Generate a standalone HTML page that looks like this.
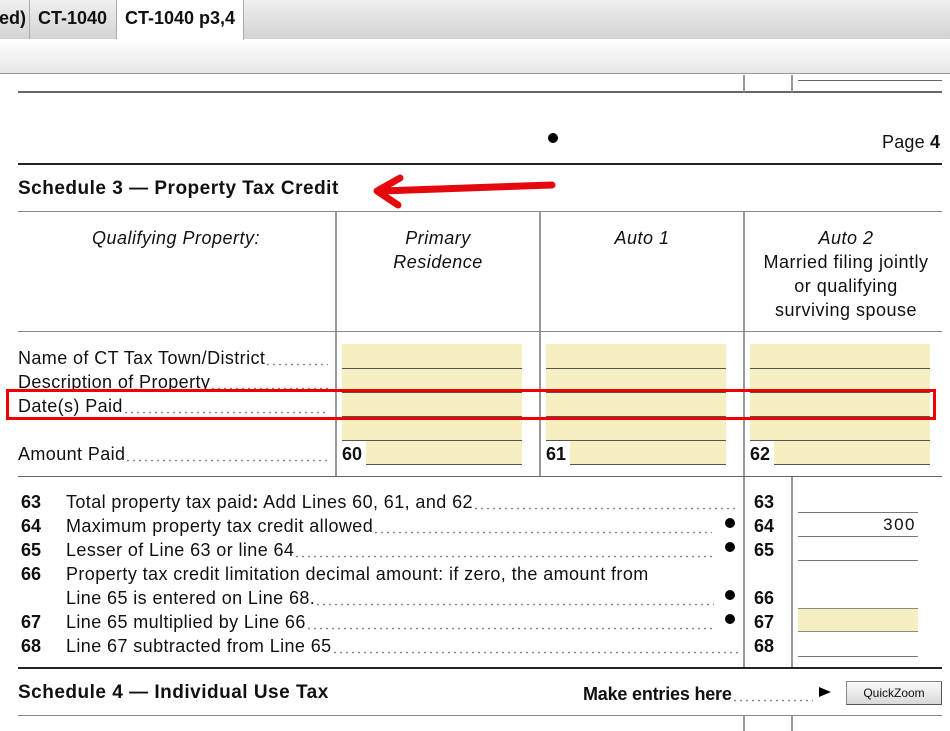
<!DOCTYPE html>
<html><head><meta charset="utf-8"><style>
*{margin:0;padding:0;box-sizing:border-box}
body{width:950px;height:731px;overflow:hidden;background:#fff;font-family:"Liberation Sans",Arial,sans-serif;color:#111;position:relative}
.a{position:absolute}
.h{position:absolute;height:1px;background:#555}
.v{position:absolute;width:2px;background:#999}
.t{position:absolute;font-size:18px;letter-spacing:0.4px;white-space:nowrap;line-height:20px}
.b{font-weight:bold;letter-spacing:0}
.y{position:absolute;background:#f5efc2}
.row{position:absolute;display:flex;font-size:18px;letter-spacing:0.4px;white-space:nowrap;line-height:20px}
.row .d{flex:1;background-image:radial-gradient(circle,#777 0.7px,transparent 1.1px);background-size:6px 3px;background-repeat:repeat-x;background-position:0 15px}
.bul{position:absolute;width:10px;height:10px;border-radius:50%;background:#000}
.hd{position:absolute;font-size:18px;letter-spacing:0.5px;line-height:24px;text-align:center;white-space:nowrap}
</style></head><body>
<div class="a" style="left:0;top:0;width:950px;height:39px;background:linear-gradient(#efefef,#d3d3d3)"></div>
<div class="a" style="left:29px;top:0;width:1px;height:39px;background:#aaa"></div>
<div class="a" style="left:116px;top:0;width:1px;height:39px;background:#aaa"></div>
<div class="a" style="left:117px;top:0;width:127px;height:40px;background:#fff;border-right:1px solid #aaa"></div>
<div class="t b" style="left:-1px;top:8px;font-size:18px">ed)</div>
<div class="t b" style="left:38px;top:8px">CT-1040</div>
<div class="t b" style="left:125px;top:8px">CT-1040 p3,4</div>
<div class="a" style="left:0;top:40px;width:950px;height:34px;background:linear-gradient(#fff,#e9e6e5);border-bottom:1px solid #999"></div>
<div class="h" style="left:18px;top:91px;width:924px;height:2px;background:#666"></div>
<div class="v" style="left:743px;top:75px;height:17px"></div>
<div class="v" style="left:791px;top:75px;height:17px"></div>
<div class="h" style="left:798px;top:80px;width:144px;background:#666"></div>
<div class="bul" style="left:548px;top:133px"></div>
<div class="t" style="left:882px;top:132px;font-size:18px;letter-spacing:0.2px">Page <b>4</b></div>
<div class="h" style="left:18px;top:163px;width:924px;height:2px;background:#222"></div>
<div class="t b" style="left:18px;top:179px;font-size:19px;letter-spacing:0.5px">Schedule 3 &#8212; Property Tax Credit</div>
<svg class="a" style="left:360px;top:172px" width="210" height="40"><path d="M192 13 L22 19 M40 6 L17 19 L38 33" stroke="#e5080c" stroke-width="7" fill="none" stroke-linecap="round" stroke-linejoin="round"/></svg>
<div class="h" style="left:18px;top:211px;width:924px;background:#888"></div>
<div class="v" style="left:335px;top:212px;height:264px"></div>
<div class="v" style="left:539px;top:212px;height:264px"></div>
<div class="v" style="left:743px;top:212px;height:264px"></div>
<div class="hd" style="left:18px;top:226px;width:316px;font-style:italic">Qualifying Property:</div>
<div class="hd" style="left:337px;top:226px;width:202px;font-style:italic">Primary<br>Residence</div>
<div class="hd" style="left:541px;top:226px;width:202px;font-style:italic">Auto 1</div>
<div class="hd" style="left:745px;top:226px;width:202px"><i>Auto 2</i><br>Married filing jointly<br>or qualifying<br>surviving spouse</div>
<div class="h" style="left:18px;top:331px;width:924px;background:#888"></div>
<div class="y" style="left:342px;top:344px;width:180px;height:96px"></div>
<div class="y" style="left:546px;top:344px;width:180px;height:96px"></div>
<div class="y" style="left:750px;top:344px;width:180px;height:96px"></div>
<div class="y" style="left:366px;top:440px;width:156px;height:24px"></div>
<div class="y" style="left:570px;top:440px;width:156px;height:24px"></div>
<div class="y" style="left:774px;top:440px;width:156px;height:24px"></div>
<div class="h" style="left:342px;top:368px;width:180px"></div><div class="h" style="left:342px;top:392px;width:180px"></div><div class="h" style="left:342px;top:416px;width:180px"></div><div class="h" style="left:342px;top:440px;width:180px"></div><div class="h" style="left:366px;top:464px;width:156px"></div>
<div class="h" style="left:546px;top:368px;width:180px"></div><div class="h" style="left:546px;top:392px;width:180px"></div><div class="h" style="left:546px;top:416px;width:180px"></div><div class="h" style="left:546px;top:440px;width:180px"></div><div class="h" style="left:570px;top:464px;width:156px"></div>
<div class="h" style="left:750px;top:368px;width:180px"></div><div class="h" style="left:750px;top:392px;width:180px"></div><div class="h" style="left:750px;top:416px;width:180px"></div><div class="h" style="left:750px;top:440px;width:180px"></div><div class="h" style="left:774px;top:464px;width:156px"></div>
<div class="row" style="left:18px;top:348px;width:310px"><span>Name of CT Tax Town/District</span><span class="d"></span></div>
<div class="row" style="left:18px;top:372px;width:310px"><span>Description of Property</span><span class="d"></span></div>
<div class="row" style="left:18px;top:396px;width:310px"><span>Date(s) Paid</span><span class="d"></span></div>
<div class="row" style="left:18px;top:444px;width:310px"><span>Amount Paid</span><span class="d"></span></div>
<div class="t b" style="left:342px;top:444px">60</div>
<div class="t b" style="left:546px;top:444px">61</div>
<div class="t b" style="left:750px;top:444px">62</div>
<div class="a" style="left:6px;top:389px;width:930px;height:31px;border:3px solid #e00"></div>
<div class="h" style="left:18px;top:476px;width:924px;background:#666"></div>
<div class="v" style="left:743px;top:477px;height:191px"></div>
<div class="v" style="left:791px;top:477px;height:191px"></div>
<div class="t b" style="left:21px;top:492px">63</div><div class="row" style="left:66px;top:492px;width:670px"><span>Total property tax paid<b>:</b> Add Lines 60, 61, and 62</span><span class="d"></span></div><div class="t b" style="left:754px;top:492px">63</div>
<div class="t b" style="left:21px;top:516px">64</div><div class="row" style="left:66px;top:516px;width:646px"><span>Maximum property tax credit allowed</span><span class="d"></span></div><div class="bul" style="left:725px;top:518px"></div><div class="t b" style="left:754px;top:516px">64</div>
<div class="t b" style="left:21px;top:540px">65</div><div class="row" style="left:66px;top:540px;width:646px"><span>Lesser of Line 63 or line 64</span><span class="d"></span></div><div class="bul" style="left:725px;top:542px"></div><div class="t b" style="left:754px;top:540px">65</div>
<div class="t b" style="left:21px;top:564px">66</div><div class="t" style="left:66px;top:564px">Property tax credit limitation decimal amount: if zero, the amount from</div>
<div class="row" style="left:66px;top:588px;width:648px"><span>Line 65 is entered on Line 68.</span><span class="d"></span></div><div class="bul" style="left:725px;top:590px"></div><div class="t b" style="left:754px;top:588px">66</div>
<div class="t b" style="left:21px;top:612px">67</div><div class="row" style="left:66px;top:612px;width:648px"><span>Line 65 multiplied by Line 66</span><span class="d"></span></div><div class="bul" style="left:725px;top:614px"></div><div class="t b" style="left:754px;top:612px">67</div>
<div class="t b" style="left:21px;top:636px">68</div><div class="row" style="left:66px;top:636px;width:672px"><span>Line 67 subtracted from Line 65</span><span class="d"></span></div><div class="t b" style="left:754px;top:636px">68</div>
<div class="h" style="left:798px;top:512px;width:120px;background:#777"></div>
<div class="t" style="left:798px;top:515px;width:118px;text-align:right;letter-spacing:1.5px;font-size:17px">300</div>
<div class="h" style="left:798px;top:536px;width:120px;background:#777"></div>
<div class="h" style="left:798px;top:560px;width:120px;background:#777"></div>
<div class="y" style="left:798px;top:608px;width:120px;height:24px;border-top:1px solid #888;border-bottom:1px solid #888"></div>
<div class="h" style="left:798px;top:656px;width:120px;background:#777"></div>
<div class="h" style="left:18px;top:667px;width:924px;height:2px;background:#222"></div>
<div class="t b" style="left:18px;top:683px;font-size:19px;letter-spacing:0.5px">Schedule 4 &#8212; Individual Use Tax</div>
<div class="row" style="left:583px;top:684px;width:230px;font-weight:bold;letter-spacing:-0.2px"><span>Make entries here</span><span class="d"></span></div>
<svg class="a" style="left:818px;top:686px" width="14" height="12"><path d="M1 1 L13 6 L1 11Z" fill="#000"/></svg>
<div class="a" style="left:846px;top:681px;width:96px;height:24px;background:linear-gradient(#fafafa,#d9d9d9);border:1px solid #888;border-right-color:#555;border-bottom-color:#555;font-size:12px;text-align:center;line-height:22px">QuickZoom</div>
<div class="h" style="left:18px;top:715px;width:924px;background:#888"></div>
<div class="v" style="left:743px;top:716px;height:15px"></div>
<div class="v" style="left:791px;top:716px;height:15px"></div>
</body></html>
